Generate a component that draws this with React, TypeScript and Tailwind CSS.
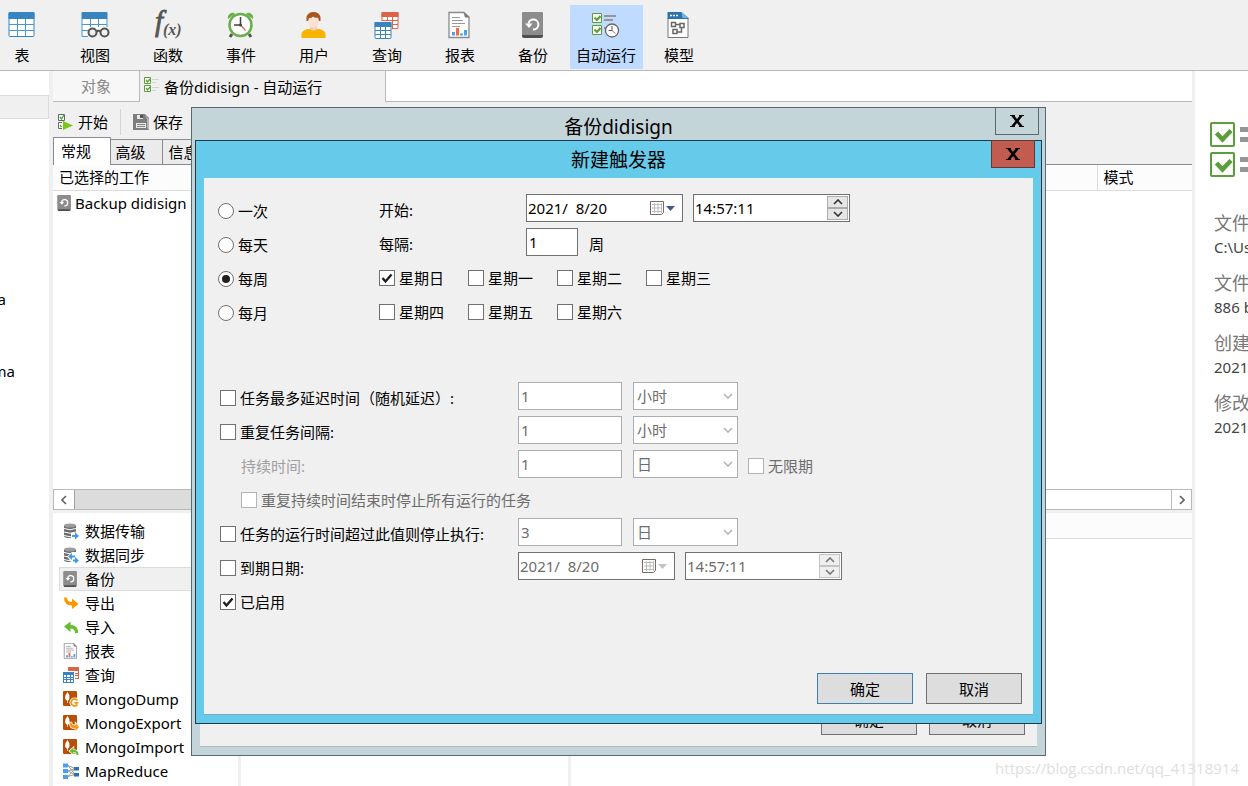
import { useState } from 'react'
import type { ReactNode } from 'react'

type IconProps = { className?: string; box?: string }

function TableIcon() {
  return (
    <svg viewBox="0 0 28 28" className="size-7" aria-hidden="true">
      <rect x="1" y="1.5" width="25" height="24" rx="1" fill="#fff" stroke="#3884c1" />
      <path d="M.5 2a1 1 0 0 1 1-1h24a1 1 0 0 1 1 1v6H.5z" fill="#3884c1" />
      <path d="M1 13.5h25M1 19.5h25M9.5 8v17M17.5 8v17" stroke="#4a97d6" fill="none" />
    </svg>
  )
}

function ViewIcon() {
  return (
    <svg viewBox="0 0 28 28" className="size-7 overflow-visible" aria-hidden="true">
      <path d="M1 8v17.5h6V18h19V8z" fill="#fff" />
      <path d="M.5 2a1 1 0 0 1 1-1h24a1 1 0 0 1 1 1v6H.5z" fill="#3884c1" />
      <path d="M1 8v17.5h6M26 8v8M1 13.5h25M1 19.5h6M9.5 8v8M17.5 8v8" stroke="#4a97d6" fill="none" />
      <circle cx="11.5" cy="21.5" r="4" fill="#f0f0f0" stroke="#555" strokeWidth="2" />
      <circle cx="23.5" cy="21.5" r="4" fill="#f0f0f0" stroke="#555" strokeWidth="2" />
      <path d="M15.5 20.5q2-1.5 4 0" stroke="#555" strokeWidth="2" fill="none" />
    </svg>
  )
}

function FunctionIcon() {
  return (
    <svg viewBox="0 0 28 28" className="size-7 overflow-visible" aria-hidden="true" fill="#555">
      <text x="1" y="20" fontSize="29" fontStyle="italic" fontFamily="Liberation Serif, serif" stroke="#555" strokeWidth=".8">f</text>
      <text x="9" y="24" fontSize="16" fontWeight="bold" fontStyle="italic" fontFamily="Liberation Serif, serif">(x)</text>
    </svg>
  )
}

function ClockIcon() {
  return (
    <svg viewBox="0 0 28 28" className="size-7" aria-hidden="true">
      <path d="m5 23-2 3M22 23l2 3" stroke="#555" strokeWidth="3" />
      <path d="M1 8q-1-4 3-6 3-1 4 1zM26 8q1-4-3-6-3-1-4 1z" fill="#6ab04a" />
      <circle cx="13.5" cy="14" r="11" fill="#fff" stroke="#6ab04a" strokeWidth="2.5" />
      <path d="M13.5 6v8H7" stroke="#444" strokeWidth="1.5" fill="none" />
      <path d="m13.5 14 5 5.5" stroke="#e8604c" strokeWidth="1.2" />
      <circle cx="13.5" cy="14" r="1.5" fill="#444" />
    </svg>
  )
}

function UserIcon() {
  return (
    <svg viewBox="0 0 28 28" className="size-7" aria-hidden="true">
      <path d="M1.5 27v-4q0-3 6-5h12q6 2 6 5v4z" fill="#f7b500" />
      <path d="M10 14h7v4q-3.500 3-7 0z" fill="#f5cfb8" />
      <ellipse cx="13.500" cy="9.500" rx="5.500" ry="7" fill="#fde3d3" />
      <path d="M6.500 10V6q1.500-5 7-5t7 5v4h-1.500l-1-3.500q-3 1-5-1-2 2-4 1.500l-1 3z" fill="#a8561e" />
    </svg>
  )
}

function QueryIcon() {
  return (
    <svg viewBox="0 0 28 28" className="size-7" aria-hidden="true">
      <rect x="9" y="1.500" width="16" height="16" rx="1" fill="#fff" stroke="#da6445" />
      <path d="M8.500 1h17v5h-17z" fill="#da6445" />
      <path d="M9 9.500h16M9 13.500h16M14.500 6v11M19.500 6v11" stroke="#da6445" />
      <rect x="1" y="10" width="18" height="18" rx="1" fill="#f0f0f0" />
      <rect x="2" y="11.500" width="16" height="16" rx="1" fill="#fff" stroke="#3884c1" />
      <path d="M1.500 11h17v5h-17z" fill="#3884c1" />
      <path d="M2 19.500h16M2 23.500h16M7.500 16v11M12.500 16v11" stroke="#3884c1" />
    </svg>
  )
}

function SmallQueryIcon() {
  return (
    <svg viewBox="0 0 16 16" className="size-4" aria-hidden="true">
      <path d="M5 0h11v12H5z" fill="#da6445" />
      <path d="M6 4h2v2H6zM9 4h2v2H9zM12 4h3v2h-3zM12 7h3v1h-3zM12 9h3v2h-3z" fill="#fff" />
      <path d="M0 4h12v12H0z" fill="#fff" />
      <path d="M0 5h11v11H0z" fill="#3884c1" />
      <path d="M1 8h2v2H1zM4 8h3v2H4zM8 8h2v2H8zM1 11h2v1H1zM4 11h3v1H4zM8 11h2v1H8zM1 13h2v2H1zM4 13h3v2H4zM8 13h2v2H8z" fill="#fff" />
    </svg>
  )
}

function ReportIcon({ className = 'size-7', box = '0 0 28 28' }: IconProps) {
  return (
    <svg viewBox={box} className={className} aria-hidden="true">
      <path d="M3 1.500h15l5 4.500v20.500H3z" fill="#fff" stroke="#8a8a8a" strokeWidth="1.300" />
      <path d="m17.500 1.500 6 5h-4.500z" fill="#777" />
      <path d="M6 6.500h8M6 9.500h11M6 12.500h13M6 15.500h8" stroke="#999" strokeWidth="1.200" />
      <path d="M6 21h3v3.500H6zM14 22.500h3v2h-3z" fill="#4fa3e0" />
      <path d="M10 17h3v7.500h-3z" fill="#f06a4a" />
      <path d="M18 19h3v5.500h-3z" fill="#4fa3e0" />
    </svg>
  )
}

function BackupIcon({ className = 'size-7', box = '0 0 28 28' }: IconProps) {
  return (
    <svg viewBox={box} className={className} aria-hidden="true">
      <rect x="3" y="1" width="21" height="26" rx="2" fill="#4f4f4f" />
      <path d="M3 3a2 2 0 0 1 2-2h17a2 2 0 0 1 2 2v21H3z" fill="#8c8c8c" />
      <path d="M9.500 12.500a5 5 0 1 1 4.500 6" stroke="#fff" strokeWidth="2" fill="none" />
      <path d="M6 12.500h7.500L10 17z" fill="#fff" />
    </svg>
  )
}

function AutoRunIcon() {
  return (
    <svg viewBox="0 0 28 28" className="size-7" aria-hidden="true">
      <path d="M.500 2.500h9v9h-9zM.500 14.500h9v9h-9z" fill="#fff" stroke="#5c9e3a" />
      <path d="m2.500 6.500 2.500 2.500L8.500 5M2.500 18.500 5 21l3.500-4" stroke="#5c9e3a" strokeWidth="2.200" fill="none" />
      <path d="M12 5h12M12 9h9M12 17h4" stroke="#969696" strokeWidth="2" />
      <circle cx="20" cy="19.500" r="6.500" fill="#fff" stroke="#666" strokeWidth="1.300" />
      <path d="M20 15v4.500h-3.500" stroke="#555" fill="none" />
      <path d="m20 19.500 3.500 3" stroke="#e8604c" />
    </svg>
  )
}

function ModelIcon() {
  return (
    <svg viewBox="0 0 28 28" className="size-7" aria-hidden="true">
      <path d="M3 7v19.500h20V7z" fill="#fff" stroke="#777" />
      <path d="M2.500 1h14l7 6v1h-21z" fill="#2c74ae" />
      <path d="m16.500 1 7 6h-6z" fill="#6cb4ea" />
      <path d="M5 4.500h2M8 4.500h2M11 4.500h2" stroke="#fff" strokeWidth="1.500" />
      <path d="M6.500 11.500h4v4h-4zM15 12.500h4v4h-4zM8 18.500h4v4H8zM10.500 13.500H15M12 21h4.500v-4.500" fill="none" stroke="#666" strokeWidth="1.500" />
    </svg>
  )
}

function CheckListIcon() {
  return (
    <svg viewBox="0 0 16 16" className="mb-1 size-4" aria-hidden="true">
      <path d="M.500.500h6v6h-6zM.500 8.500h6v6h-6z" fill="#fff" stroke="#5c9e3a" />
      <path d="m2 3 1.500 2L6 2M2 11l1.500 2L6 10" stroke="#5c9e3a" strokeWidth="1.300" fill="none" />
      <path d="M8 2.500h7M8 5.500h4M8 10.500h7M8 13.500h4" stroke="#d4d4d4" />
    </svg>
  )
}

function StartIcon() {
  return (
    <svg viewBox="0 0 16 16" className="size-4" aria-hidden="true">
      <path d="M1.500.5h6v6h-6zM5 8.500H1.500v6H5" fill="#fff" stroke="#666" />
      <path d="m3 3 1.500 2L7 1M3 11l1.500 2" stroke="#3fae3f" strokeWidth="1.400" fill="none" />
      <path d="m6 7 10 4.500L6 16z" fill="#7dc51c" />
    </svg>
  )
}

function SaveIcon() {
  return (
    <svg viewBox="0 0 16 16" className="size-4" aria-hidden="true">
      <path d="M0 0h12l4 4v12H0z" fill="#7d7d7d" />
      <path d="m11 0 5 5v11l-2-2V5z" fill="#b5b5b5" />
      <path d="M4 1h6v4H4zM3 9h10v5H3z" fill="#e8e8e8" />
      <path d="M7 1h3v3H7z" fill="#555" />
      <path d="M4 10.500h8M4 12.500h8" stroke="#888" />
    </svg>
  )
}

function Cylinder() {
  return (
    <>
      <path d="M1 2.500V13q0 2 6 2t6-2V2.500z" fill="#6b6b6b" />
      <path d="M1 5.500q6 2.500 12 0M1 9q6 2.500 12 0M1 12.500q6 2.500 12 0" stroke="#fff" fill="none" />
      <ellipse cx="7" cy="2.500" rx="6" ry="2" fill="#9c9c9c" />
    </>
  )
}

function TransferIcon() {
  return (
    <svg viewBox="0 0 16 16" className="size-4" aria-hidden="true">
      <Cylinder />
      <path d="M8 10h8v6H8z" fill="#fff" />
      <path d="M9 12h3V9.500l4 3.500-4 3.500V14H9z" fill="#3d9bf0" />
    </svg>
  )
}

function SyncIcon() {
  return (
    <svg viewBox="0 0 16 16" className="size-4" aria-hidden="true">
      <Cylinder />
      <path d="M4 9.500 9 5h4v3h3v8H9z" fill="#fff" />
      <path d="M5 9.500 9 6v2.500h3v2H9V13zM10 12.500h2V10l4 3.500-4 3.500v-2.500h-2z" fill="#3d9bf0" />
    </svg>
  )
}

function ExportIcon() {
  return (
    <svg viewBox="0 0 16 16" className="size-4" aria-hidden="true">
      <path d="M1 2.500h3Q4 7 9 7V3.500L15.500 9 9 14v-3.500Q1 10.500 1 2.500z" fill="#ff9800" />
    </svg>
  )
}

function ImportIcon() {
  return (
    <svg viewBox="0 0 16 16" className="size-4" aria-hidden="true">
      <path d="M15 14h-3q0-4.500-4.500-4.500V13L1 7.500 7.500 2.500V6Q15 6 15 14z" fill="#5fbf2d" />
    </svg>
  )
}

function MongoIcon({ kind }: { kind: 'dump' | 'export' | 'import' }) {
  return (
    <svg viewBox="0 0 16 16" className="size-4" aria-hidden="true">
      <rect width="14" height="15" rx="1" fill="#b94e08" />
      <path d="M4.500 1Q7 4 6.500 7 6 9 4.800 10v2h-.6v-2Q2.500 9 2 7 2 4 4.500 1z" fill="#fff" />
      {kind === 'dump' && (
        <>
          <circle cx="11.500" cy="11.500" r="5" fill="#fff" />
          <path d="M14.500 13.500a3.500 3.500 0 1 1 0-4" stroke="#f59a14" strokeWidth="1.800" fill="none" />
          <path d="M10.500 11H16l-2.500 3z" fill="#f59a14" />
        </>
      )}
      {kind === 'export' && (
        <path d="M6.500 7.500h2q0 3 4 3V8l3.500 4-3.500 4v-2.500q-6 0-6-6z" fill="#f59a14" stroke="#fff" strokeWidth="1.500" paintOrder="stroke" />
      )}
      {kind === 'import' && (
        <path d="M15.500 16h-2q0-3-3-3v2.500L6.500 12l4-3.500V11q5 0 5 5z" fill="#5fbf2d" stroke="#fff" strokeWidth="1.500" paintOrder="stroke" />
      )}
    </svg>
  )
}

function MapReduceIcon() {
  return (
    <svg viewBox="0 0 16 16" className="size-4" aria-hidden="true">
      <path d="M5 2.500 12 5.500 5 8l7 3.500L5 13.500M5 2.500l7 9M5 13.500l7-8" stroke="#999" fill="none" />
      <path d="M0 .5h5v4H0zM0 6h5v4H0zM0 12h5v4H0z" fill="#4f9fe8" />
      <path d="M11 4h5v3.500h-5zM11 10h5v3.500h-5z" fill="#2f6fae" />
    </svg>
  )
}

function BigCheckRow() {
  return (
    <svg viewBox="0 0 50 26" className="h-[26px] w-[50px] shrink-0" aria-hidden="true">
      <rect x="1" y="1" width="23" height="23" rx="1" fill="#fff" stroke="#5c9e3a" strokeWidth="2" />
      <path d="m6.500 11 6 6.500L21 8.500" stroke="#5c9e3a" strokeWidth="4.500" fill="none" />
      <path d="M30 7.500h20M30 17.500h20" stroke="#969696" strokeWidth="5" />
    </svg>
  )
}

function CalendarIcon({ muted = false }: { muted?: boolean }) {
  return (
    <svg viewBox="0 0 26 16" className="h-4 w-[26px]" aria-hidden="true">
      <path d="M.5 1.500h13v11l-2 2H.5z" fill="#fff" stroke="#7a6a60" />
      <path d="M2 4.500h10M2 8h10M2 11.500h10M4.500 3v10M8 3v10M11.500 3v10" stroke="#bbb" fill="none" />
      <path d="M16 6h9l-4.500 5z" fill={muted ? '#c4c4bc' : '#41598c'} />
    </svg>
  )
}

function Chevron({ className = '', d = 'm1 1 4 4 4-4' }: { className?: string; d?: string }) {
  return (
    <svg viewBox="0 0 10 6" className={`h-[6px] w-[10px] ${className}`} fill="none" stroke="currentColor" strokeWidth="1.600" aria-hidden="true">
      <path d={d} />
    </svg>
  )
}

function CloseGlyph() {
  return (
    <svg viewBox="0 0 14 12" className="h-3 w-[14px]" aria-hidden="true">
      <path d="m2.500.5 9 11M11.500.5l-9 11" stroke="#000" strokeWidth="2.600" />
      <path d="M0 .5h5M9 .5h5M0 11.500h5M9 11.500h5" stroke="#000" />
    </svg>
  )
}

const TOOLBAR: { label: string; icon: ReactNode; active?: boolean }[] = [
  { label: '表', icon: <TableIcon /> },
  { label: '视图', icon: <ViewIcon /> },
  { label: '函数', icon: <FunctionIcon /> },
  { label: '事件', icon: <ClockIcon /> },
  { label: '用户', icon: <UserIcon /> },
  { label: '查询', icon: <QueryIcon /> },
  { label: '报表', icon: <ReportIcon /> },
  { label: '备份', icon: <BackupIcon /> },
  { label: '自动运行', icon: <AutoRunIcon />, active: true },
  { label: '模型', icon: <ModelIcon /> },
]

const JOB_TYPES: { label: string; icon: ReactNode; active?: boolean }[] = [
  { label: '数据传输', icon: <TransferIcon /> },
  { label: '数据同步', icon: <SyncIcon /> },
  { label: '备份', icon: <BackupIcon className="size-4" box="2 1 26 26" />, active: true },
  { label: '导出', icon: <ExportIcon /> },
  { label: '导入', icon: <ImportIcon /> },
  { label: '报表', icon: <ReportIcon className="size-4" box="1 1 26 26" /> },
  { label: '查询', icon: <SmallQueryIcon /> },
  { label: 'MongoDump', icon: <MongoIcon kind="dump" /> },
  { label: 'MongoExport', icon: <MongoIcon kind="export" /> },
  { label: 'MongoImport', icon: <MongoIcon kind="import" /> },
  { label: 'MapReduce', icon: <MapReduceIcon /> },
]

const FILE_INFO = [
  ['文件', 'C:\\Us'],
  ['文件', '886 b'],
  ['创建', '2021'],
  ['修改', '2021'],
]

const FREQUENCIES = ['一次', '每天', '每周', '每月']
const WEEKDAYS = ['星期日', '星期一', '星期二', '星期三', '星期四', '星期五', '星期六']

function Check({ label, checked = false, disabled = false }: { label: string; checked?: boolean; disabled?: boolean }) {
  return (
    <label className={`flex h-8 items-center gap-1 whitespace-nowrap ${disabled ? 'text-[#6d6d6d]' : ''}`}>
      <span className="relative flex size-4 shrink-0">
        <input
          type="checkbox"
          defaultChecked={checked}
          disabled={disabled}
          className="peer size-4 appearance-none border border-[#707070] bg-white disabled:border-[#b4b4b4]"
        />
        <svg viewBox="0 0 16 16" className="pointer-events-none absolute inset-0 hidden peer-checked:block" aria-hidden="true">
          <path d="m3.500 8 3 3.500 6-7" stroke="#1f1f1f" strokeWidth="2.400" fill="none" />
        </svg>
      </span>
      {label}
    </label>
  )
}

function DateTime({ name, disabled = false }: { name: string; disabled?: boolean }) {
  const tone = disabled ? 'text-[#6d6d6d]' : 'text-black'
  const spin = disabled
    ? 'flex flex-1 items-center justify-center border border-[#c4c4c4] bg-[#efefef] text-[#777]'
    : 'flex flex-1 items-center justify-center border border-[#acacac] bg-[#e6e6e6] text-[#333]'
  return (
    <div className={`flex gap-[10px] ${tone}`}>
      <div className="flex h-7 w-[157px] items-center border border-[#707070] bg-white pr-[6px]">
        <input
          aria-label={`${name}日期`}
          defaultValue="2021/  8/20"
          disabled={disabled}
          className="h-full min-w-0 flex-1 pl-px outline-none"
        />
        <button type="button" aria-label="打开日历" disabled={disabled}>
          <CalendarIcon muted={disabled} />
        </button>
      </div>
      <div className="flex h-7 w-[157px] border border-[#707070] bg-white p-px">
        <input
          aria-label={`${name}时间`}
          defaultValue="14:57:11"
          disabled={disabled}
          className="h-full min-w-0 flex-1 outline-none"
        />
        <div className="flex w-[21px] flex-col">
          <button type="button" aria-label="增加" disabled={disabled} className={spin}>
            <Chevron d="m1 5 4-4 4 4" />
          </button>
          <button type="button" aria-label="减少" disabled={disabled} className={spin}>
            <Chevron />
          </button>
        </div>
      </div>
    </div>
  )
}

function Amount({ name, value, unit }: { name: string; value: string; unit: string }) {
  return (
    <div className="flex gap-[11px] text-[#6d6d6d]">
      <input
        aria-label={name}
        defaultValue={value}
        disabled
        className="h-7 w-[104px] border border-[#abadb3] bg-white pl-[2px]"
      />
      <div className="relative">
        <select
          aria-label={`${name}单位`}
          disabled
          className="h-7 w-[105px] appearance-none border border-[#abadb3] bg-white pl-[3px] opacity-100"
        >
          <option>{unit}</option>
        </select>
        <Chevron className="pointer-events-none absolute top-[11px] right-[5px] text-[#b4b4b4]" />
      </div>
    </div>
  )
}

function TriggerDialog() {
  const [frequency, setFrequency] = useState('每周')

  return (
    <section
      role="dialog"
      aria-label="新建触发器"
      className="absolute top-8 left-[3px] flex h-[584px] w-[847px] flex-col border border-[#1f3a4a] bg-[#66caea] px-2 pb-2"
    >
      <header className="relative flex h-[37px] shrink-0 items-center justify-center">
        <h2 className="text-[19px] leading-6">新建触发器</h2>
        <button
          type="button"
          aria-label="关闭"
          className="absolute -top-px -right-[2px] flex h-7 w-11 items-center justify-center border border-[#5c3a38] bg-[#c25b50]"
        >
          <CloseGlyph />
        </button>
      </header>

      <form className="flex flex-1 flex-col border-b border-[#7fa9bc] bg-[#f0f0f0] pt-4 pr-[11px] pb-[10px] pl-[14px]">
        <div className="flex">
          <fieldset className="w-[161px]">
            {FREQUENCIES.map(item => (
              <label key={item} className="flex h-[34px] items-center gap-1">
                <input
                  type="radio"
                  name="frequency"
                  checked={frequency === item}
                  onChange={() => setFrequency(item)}
                  className="flex size-4 appearance-none items-center justify-center rounded-full border border-[#707070] bg-white before:size-2 before:rounded-full checked:before:bg-[#1f1f1f]"
                />
                {item}
              </label>
            ))}
          </fieldset>

          <div>
            <div className="flex h-[34px] items-start">
              <span className="w-[147px] leading-8">开始:</span>
              <DateTime name="开始" />
            </div>
            <div className="flex h-[34px] items-start">
              <label htmlFor="interval" className="w-[147px] leading-8">每隔:</label>
              <input id="interval" defaultValue="1" className="h-7 w-[52px] border border-[#707070] bg-white pl-[2px]" />
              <span className="pl-[11px] leading-8">周</span>
            </div>
            <div className="grid grid-cols-[repeat(4,89px)] gap-y-[2px]">
              {WEEKDAYS.map((day, i) => (
                <Check key={day} label={day} checked={i === 0} />
              ))}
            </div>
          </div>
        </div>

        <div className="mt-[52px] grid grid-cols-[298px_1fr] items-start gap-y-[2px] pl-[2px]">
          <Check label="任务最多延迟时间（随机延迟）:" />
          <Amount name="延迟时间" value="1" unit="小时" />

          <Check label="重复任务间隔:" />
          <Amount name="重复间隔" value="1" unit="小时" />

          <span className="pl-[21px] leading-8 text-[#a0a0a0]">持续时间:</span>
          <div className="flex gap-[10px]">
            <Amount name="持续时间" value="1" unit="日" />
            <Check label="无限期" disabled />
          </div>

          <div className="col-span-2 pl-[21px]">
            <Check label="重复持续时间结束时停止所有运行的任务" disabled />
          </div>

          <Check label="任务的运行时间超过此值则停止执行:" />
          <Amount name="最长运行时间" value="3" unit="日" />

          <Check label="到期日期:" />
          <DateTime name="到期" disabled />

          <Check label="已启用" checked />
        </div>

        <div className="mt-auto flex justify-end gap-[13px]">
          <button type="button" className="h-[31px] w-24 border border-[#3c7fb1] bg-[#dddddd]">确定</button>
          <button type="button" className="h-[31px] w-24 border border-[#707070] bg-[#dddddd]">取消</button>
        </div>
      </form>
    </section>
  )
}

function BackupDialog() {
  return (
    <section
      role="dialog"
      aria-label="备份didisign"
      className="absolute top-[107px] left-[191px] flex h-[649px] w-[855px] flex-col border border-[#5a6870] bg-[#c4d5da] px-2 pb-2"
    >
      <header className="relative flex h-[37px] shrink-0 items-center justify-center">
        <h2 className="text-[19px] leading-6">备份didisign</h2>
        <button
          type="button"
          aria-label="关闭"
          className="absolute -top-px -right-[2px] flex h-7 w-11 items-center justify-center border border-[#5a6870]"
        >
          <CloseGlyph />
        </button>
      </header>
      <div className="flex flex-1 items-end justify-end gap-3 border-b border-[#a9bac2] bg-[#f0f0f0] pr-3 pb-[11px]">
        <button type="button" className="h-[31px] w-24 border border-[#707070] bg-[#dddddd]">确定</button>
        <button type="button" className="h-[31px] w-24 border border-[#707070] bg-[#dddddd]">取消</button>
      </div>
      <TriggerDialog />
    </section>
  )
}

// Left object tree, scrolled so that only the ends of the long names show
function ObjectTree() {
  return (
    <aside className="w-[49px] shrink-0 bg-white pt-6">
      <div className="h-6 border-y border-r border-[#dcdcdc] bg-[#f0f0f0]" />
      <div className="mt-[168px] flex h-6 w-[6px] items-center justify-end overflow-hidden">a</div>
      <div className="mt-12 flex h-6 w-[15px] items-center justify-end overflow-hidden">ma</div>
    </aside>
  )
}

function Workspace() {
  return (
    <main className="flex min-w-0 flex-1 flex-col">
      <div className="flex h-[31px] shrink-0">
        <button type="button" className="w-[87px] border-r border-b border-[#b9b9b9] bg-[#f7f7f7] text-[#888]">对象</button>
        <button type="button" className="flex w-[246px] items-center gap-1 border-r border-[#b9b9b9] pl-1">
          <CheckListIcon />
          备份didisign - 自动运行
        </button>
        <div className="flex-1 border-b border-[#b9b9b9] bg-white" />
      </div>

      <div className="flex h-[35px] shrink-0 items-center pt-1 pl-1">
        <button type="button" className="flex items-center gap-[5px]">
          <StartIcon />
          开始
        </button>
        <div className="mx-3 h-[26px] w-px bg-[#d4d4d4]" />
        <button type="button" className="flex items-center gap-1">
          <SaveIcon />
          保存
        </button>
      </div>

      <div role="tablist" className="flex h-7 shrink-0 items-stretch">
        <button role="tab" type="button" aria-selected="true" className="w-[58px] border-x border-t border-[#8a8a94] bg-white pr-3 pb-[2px]">常规</button>
        <button role="tab" type="button" aria-selected="false" className="mt-[2px] w-[52px] border-t border-r border-b border-[#8a8a94] bg-[#ebebeb] pr-3">高级</button>
        <button role="tab" type="button" aria-selected="false" className="mt-[2px] w-[52px] border-t border-r border-b border-[#8a8a94] bg-[#ebebeb] pr-[10px]">信息</button>
        <div className="flex-1 border-b border-[#8a8a94]" />
      </div>

      <div className="min-h-0 flex-1 bg-white">
        <table className="w-full table-fixed border-collapse text-left">
          <thead>
            <tr className="h-[25px] border-b border-[#dcdcdc] bg-[#fcfcfc]">
              <th className="pl-[6px] font-normal">已选择的工作</th>
              <th className="w-[95px] border-l border-[#dcdcdc] pl-[6px] font-normal">模式</th>
            </tr>
          </thead>
          <tbody>
            <tr className="h-[26px]">
              <td>
                <span className="flex items-center gap-[2px] pl-1">
                  <BackupIcon className="size-4" box="2 1 26 26" />
                  Backup didisign
                </span>
              </td>
              <td />
            </tr>
          </tbody>
        </table>
      </div>

      <div className="flex h-[21px] shrink-0 border border-[#b9b9b9] bg-white text-[#606060]">
        <button type="button" aria-label="向左滚动" className="flex w-5 items-center justify-center">
          <Chevron className="rotate-90" />
        </button>
        <div className="w-3/5 border-l border-[#a0a0a0] bg-[#dcdcdc]" />
        <button type="button" aria-label="向右滚动" className="ml-auto flex w-5 items-center justify-center border-l border-[#b9b9b9]">
          <Chevron className="-rotate-90" />
        </button>
      </div>

      <div className="mt-[3px] flex h-[273px] shrink-0 gap-[3px]">
        <ul className="w-[185px] bg-white pt-[6px] pl-[6px]">
          {JOB_TYPES.map(job => (
            <li
              key={job.label}
              className={`flex h-6 items-center gap-[6px] border pl-[3px] ${job.active ? 'border-[#dcdcdc] bg-[#f0f0f0]' : 'border-transparent'}`}
            >
              {job.icon}
              {job.label}
            </li>
          ))}
        </ul>
        <div className="w-[327px] bg-white" />
        <div className="flex-1 bg-white">
          <div className="h-[26px] border-b border-[#dcdcdc] bg-[#fcfcfc]" />
        </div>
      </div>
    </main>
  )
}

function InfoPane() {
  return (
    <aside className="w-[53px] shrink-0 overflow-hidden bg-white pt-[51px] pl-[15px] whitespace-nowrap">
      <div className="flex flex-col gap-1">
        <BigCheckRow />
        <BigCheckRow />
      </div>
      <dl className="mt-[33px] pl-1">
        {FILE_INFO.map(([term, value]) => (
          <div key={term + value} className="h-[60px]">
            <dt className="h-6 text-[18px] leading-6 text-[#777]">{term}</dt>
            <dd className="h-6 leading-6 text-[#444]">{value}</dd>
          </div>
        ))}
      </dl>
    </aside>
  )
}

export default function App() {
  return (
    <div className="relative flex h-screen flex-col overflow-hidden bg-[#f0f0f0] font-['Noto_Sans','Noto_Sans_CJK_SC',sans-serif] text-[15px] leading-5 text-black">
      <nav className="-ml-[14px] flex h-[71px] shrink-0 border-b border-[#b9b9b9] pt-[5px]">
        {TOOLBAR.map(item => (
          <button
            key={item.label}
            type="button"
            className={`flex h-16 w-[73px] flex-col items-center gap-[6px] pt-[6px] pr-px ${item.active ? 'bg-[#bfdbff]' : ''}`}
          >
            {item.icon}
            {item.label}
          </button>
        ))}
      </nav>

      <div className="flex min-h-0 flex-1">
        <ObjectTree />
        <div className="w-1 shrink-0" />
        <Workspace />
        <div className="w-[3px] shrink-0" />
        <InfoPane />
      </div>

      <BackupDialog />

      <p className="absolute right-[9px] bottom-2 font-['Open_Sans',sans-serif] text-[15px] text-[#dedede]">
        https://blog.csdn.net/qq_41318914
      </p>
    </div>
  )
}
